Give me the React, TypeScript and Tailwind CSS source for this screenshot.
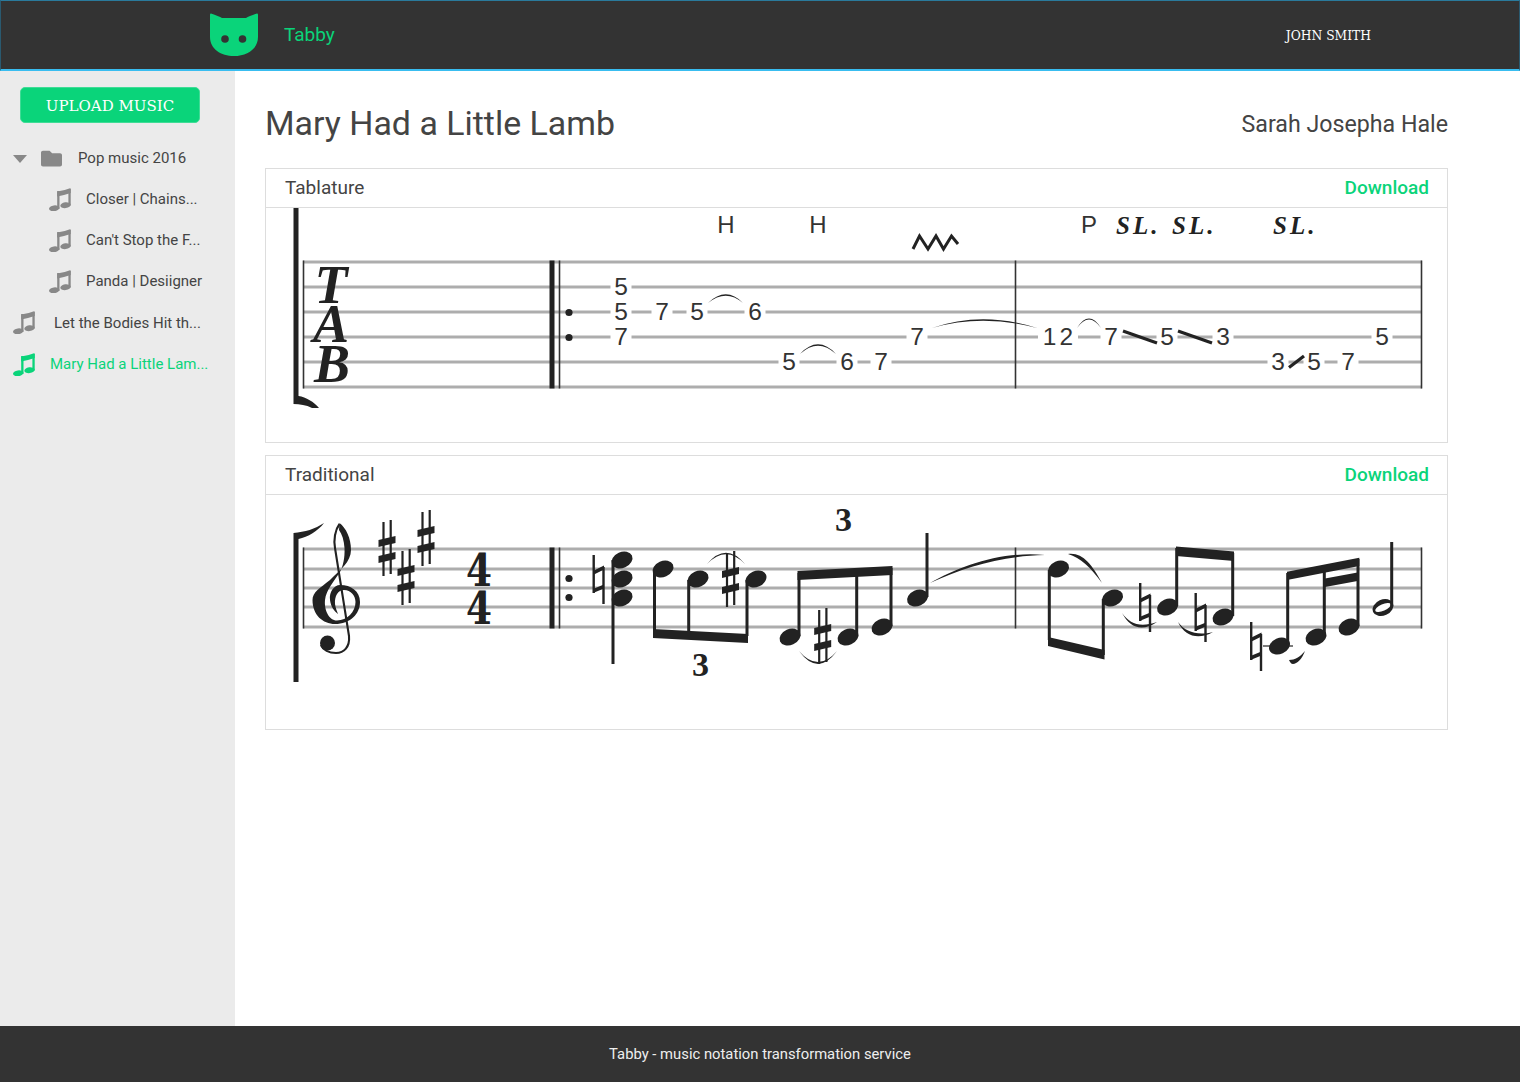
import React from "react";
import { FaFolder } from "react-icons/fa";

const INK = "#222222";
const GREEN = "#0ad47a";

function Staff({ ys, bars }: { ys: number[]; bars: number[] }) {
  return (
    <g>
      {ys.map((y) => (
        <line key={y} x1={303} x2={1422} y1={y} y2={y} stroke="#adadad" strokeWidth={3.2} />
      ))}
      {bars.map((x) => (
        <line key={x} x1={x} x2={x} y1={ys[0] - 1.5} y2={ys[ys.length - 1] + 1.5} stroke="#333" strokeWidth={1.6} />
      ))}
      <rect x={549.5} y={ys[0] - 1.5} width={5} height={ys[ys.length - 1] - ys[0] + 3} fill={INK} />
    </g>
  );
}

function Digit({ x, y, t, w = 21 }: { x: number; y: number; t: string; w?: number }) {
  return (
    <g>
      <rect x={x - w / 2} y={y - 10} width={w} height={20} fill="#fff" />
      <text
        x={t.length > 1 ? x + 1.5 : x}
        y={y + 8}
        textAnchor="middle"
        fontSize={24.5}
        fill="#333"
        letterSpacing={t.length > 1 ? 3 : 0}
        className="font-['Liberation_Sans']"
      >
        {t}
      </text>
    </g>
  );
}

function Slur({ x1, y1, cx, cy, x2, y2, w = 1.6 }: { x1: number; y1: number; cx: number; cy: number; x2: number; y2: number; w?: number }) {
  return <path d={`M${x1} ${y1} Q${cx} ${cy - w} ${x2} ${y2} Q${cx} ${cy + w} ${x1} ${y1}Z`} fill={INK} />;
}

function Label({ x, t }: { x: number; t: string }) {
  return (
    <text x={x} y={233} textAnchor="middle" fontSize={24} fill="#333" className="font-['Liberation_Sans']">
      {t}
    </text>
  );
}

function SL({ x }: { x: number }) {
  return (
    <text
      x={x}
      y={234}
      fontSize={25}
      fontWeight={700}
      fontStyle="italic"
      letterSpacing={3}
      fill={INK}
      className="font-['Liberation_Serif']"
    >
      SL.
    </text>
  );
}

function TabSheet() {
  const s = [262, 287, 312, 337, 362, 387];
  const digits: [number, number, string, number?][] = [
    [621, 287, "5"], [621, 312, "5"], [662, 312, "7"], [697, 312, "5"], [755, 312, "6"],
    [621, 337, "7"], [917, 337, "7"], [1058, 337, "12", 40], [1111, 337, "7"], [1167, 337, "5"],
    [1223, 337, "3"], [1382, 337, "5"], [789, 362, "5"], [847, 362, "6"], [881, 362, "7"],
    [1278, 362, "3"], [1314, 362, "5"], [1348, 362, "7"],
  ];
  return (
    <svg viewBox="266 208 1181 234" width={1181} height={234} className="block">
      <Staff ys={s} bars={[303.5, 559.5, 1015.5, 1421.5]} />
      <path d="M293.5 208H298.5V396C306 397 314 402 319 408H312C306 405 300 404 293.5 404Z" fill={INK} />
      {digits.map(([x, y, t, w]) => (
        <Digit key={`${x}-${y}`} x={x} y={y} t={t} w={w} />
      ))}
      <circle cx={569} cy={312.5} r={3.6} fill={INK} />
      <circle cx={569} cy={337.5} r={3.6} fill={INK} />
      <g fontSize={54} fontWeight={700} fontStyle="italic" fill={INK} textAnchor="middle" className="font-['Liberation_Serif']">
        <text x={331} y={303}>T</text>
        <text x={331} y={342}>A</text>
        <text x={332} y={382}>B</text>
      </g>
      <Label x={726} t="H" />
      <Label x={818} t="H" />
      <Label x={1089} t="P" />
      <SL x={1116} />
      <SL x={1172} />
      <SL x={1273} />
      <path d="M913 249L919.5 236L928 249L936 236L943.5 249L951.5 236L958 244" fill="none" stroke={INK} strokeWidth={3} />
      <Slur x1={708} y1={303} cx={726} cy={287} x2={743} y2={303} w={1.3} />
      <Slur x1={800} y1={354} cx={818} cy={336} x2={836} y2={354} w={1.3} />
      <Slur x1={932} y1={328} cx={982} cy={312} x2={1037} y2={328} w={1.5} />
      <Slur x1={1077} y1={328} cx={1089} cy={310} x2={1101} y2={328} w={0.9} />
      <g stroke={INK} strokeWidth={3.2}>
        <line x1={1123} y1={331} x2={1157} y2={343} />
        <line x1={1178} y1={331} x2={1212} y2={343} />
        <line x1={1289} y1={367.5} x2={1304} y2={356} />
      </g>
    </svg>
  );
}

function Head({ x, y, hollow }: { x: number; y: number; hollow?: boolean }) {
  return (
    <g transform={`rotate(-24 ${x} ${y})`}>
      <ellipse cx={x} cy={y} rx={10.9} ry={8} fill={INK} />
      {hollow && <ellipse cx={x} cy={y} rx={8.4} ry={3.2} fill="#fff" />}
    </g>
  );
}

function Stem({ x, y1, y2, w = 3 }: { x: number; y1: number; y2: number; w?: number }) {
  return <rect x={x - w / 2} y={y1} width={w} height={y2 - y1} fill={INK} />;
}

function Sharp({ x, y }: { x: number; y: number }) {
  const h = 27;
  return (
    <g fill={INK}>
      <rect x={x - 4.6} y={y - h + 1} width={2.2} height={h * 2} />
      <rect x={x + 2.6} y={y - h - 1} width={2.2} height={h * 2} />
      <polygon points={`${x - 8.5},${y - 8} ${x + 8.5},${y - 12} ${x + 8.5},${y - 5} ${x - 8.5},${y - 1}`} />
      <polygon points={`${x - 8.5},${y + 8} ${x + 8.5},${y + 4} ${x + 8.5},${y + 11} ${x - 8.5},${y + 15}`} />
    </g>
  );
}

function Natural({ x, y }: { x: number; y: number }) {
  return (
    <g fill={INK}>
      <rect x={x - 6} y={y - 24} width={2.4} height={38} />
      <rect x={x + 3.8} y={y - 12} width={2.4} height={37} />
      <polygon points={`${x - 5.5},${y - 8} ${x + 5.5},${y - 13.5} ${x + 5.5},${y - 9.5} ${x - 5.5},${y - 4}`} />
      <polygon points={`${x - 5.5},${y + 10} ${x + 5.5},${y + 5.5} ${x + 5.5},${y + 9.5} ${x - 5.5},${y + 14}`} />
    </g>
  );
}

function Clef() {
  return (
    <g>
      <path
        d="M339.5 523C346 528 351 538 351 550C351 562 340 570 330 580C320 588 312.5 592 312.5 600C312.5 615 323 624 335 624C350 624 360 614 360 602C360 591 351 585 340 585C334 585 329 592 330 600C331 607 334 611 338 614C337 611 335.5 608 335 604C334.5 596 338 590 344 590C351 590 355.5 596 355.5 602C355.5 612 347 620.5 337 620.5C329 620.5 324 610 325 600C326 590 335 580 340 572C343 566 345 558 344.5 548C344 540 342 534 339 530Z"
        fill={INK}
      />
      <path
        d="M339.5 524C335 530 333.5 540 335 548L349 636C350 647 344 653 336 653C329 653 323 650 321 645"
        fill="none"
        stroke={INK}
        strokeWidth={2.1}
      />
      <circle cx={327.5} cy={643} r={7.5} fill={INK} />
    </g>
  );
}

function Poly({ p }: { p: string }) {
  return <polygon points={p} fill={INK} />;
}

function Crescent({ d }: { d: string }) {
  return <path d={d} fill={INK} />;
}

function TraditionalSheet() {
  const s = [549, 569, 588, 607, 627];
  return (
    <svg viewBox="266 495 1181 234" width={1181} height={234} className="block">
      <Staff ys={s} bars={[303.5, 559.5, 1015.5, 1421.5]} />
      <path d="M293.5 533C305 532 315 529 324 523C318 531 308 537 298.5 539V682H293.5Z" fill={INK} />
      <Clef />
      <Sharp x={387} y={548} />
      <Sharp x={406} y={577} />
      <Sharp x={426} y={538} />
      <g fontSize={45} fontWeight={700} fill={INK} textAnchor="middle" className="font-['DejaVu_Serif']">
        <text x={479} y={586} textLength={26} lengthAdjust="spacingAndGlyphs">4</text>
        <text x={479} y={624} textLength={26} lengthAdjust="spacingAndGlyphs">4</text>
      </g>
      <g fontSize={34} fontWeight={700} fill={INK} textAnchor="middle" className="font-['Liberation_Serif']">
        <text x={843.5} y={531}>3</text>
        <text x={700.5} y={676}>3</text>
      </g>
      <circle cx={569} cy={578.5} r={3.6} fill={INK} />
      <circle cx={569} cy={597.5} r={3.6} fill={INK} />

      <Natural x={598.5} y={579} />
      <Head x={622} y={560} />
      <Head x={622} y={579} />
      <Head x={622} y={598} />
      <Stem x={613} y1={560} y2={664} />

      <Head x={663} y={569} />
      <Head x={698} y={579} />
      <Head x={756} y={579} />
      <Stem x={654.5} y1={570} y2={632} />
      <Stem x={688.7} y1={580} y2={632} />
      <Stem x={747} y1={580} y2={636} />
      <Poly p="653,629 748,634 748,643 653,638" />
      <Sharp x={730.5} y={579} />
      <Slur x1={707} y1={564} cx={726} cy={543} x2={745} y2={564} w={1.4} />

      <Head x={790} y={637} />
      <Head x={848} y={637} />
      <Head x={882} y={627} />
      <Stem x={799} y1={573} y2={636} />
      <Stem x={856.7} y1={572} y2={636} />
      <Stem x={891} y1={568} y2={626} />
      <Poly p="797.5,571 892.5,566 892.5,575 797.5,580" />
      <Sharp x={822.7} y={636} />
      <Slur x1={799} y1={651} cx={818} cy={675} x2={837} y2={651} w={1.8} />

      <Head x={917.5} y={598} />
      <Stem x={927} y1={533} y2={597} />
      <Crescent d="M930 583C960 566 1000 551 1045 555C1000 556 965 567 930 583Z" />

      <Head x={1058.5} y={569} />
      <Head x={1112.5} y={598} />
      <Stem x={1049.3} y1={570} y2={640} />
      <Stem x={1103.3} y1={599} y2={655} />
      <Poly p="1048,637 1104.5,650 1104.5,659.5 1048,646" />
      <Crescent d="M1068 554C1082 552 1092 564 1102 583C1090 567 1081 558 1068 554Z" />

      <Natural x={1145} y={607} />
      <Crescent d="M1122 613C1130 624 1140 628 1157 622C1142 632 1130 628 1122 613Z" />
      <Head x={1167.5} y={607} />
      <Head x={1223} y={617} />
      <Stem x={1176.7} y1={548} y2={606} />
      <Stem x={1232.7} y1={553} y2={616} />
      <Poly p="1176,546.5 1234,551.5 1234,561 1176,556" />
      <Natural x={1200.5} y={617} />
      <Crescent d="M1178 622C1185 632 1198 636 1213 632C1199 640 1185 637 1178 622Z" />

      <Natural x={1256} y={646} />
      <line x1={1263} x2={1293} y1={646} y2={646} stroke={INK} strokeWidth={1.2} />
      <Head x={1279.5} y={646} />
      <Head x={1316} y={637} />
      <Head x={1349} y={627} />
      <Stem x={1287.7} y1={573} y2={645} />
      <Stem x={1324.3} y1={566} y2={636} />
      <Stem x={1358} y1={559} y2={626} />
      <Poly p="1287,571.7 1359.3,557.7 1359.3,566 1287,580" />
      <Poly p="1325,578.5 1357.5,572.5 1357.5,581 1325,587" />
      <Crescent d="M1289 660C1295 660 1300 657 1305 651C1302 659 1297 664 1293 664C1291 664 1290 662 1289 660Z" />

      <Head x={1383} y={607.5} hollow />
      <Stem x={1391.7} y1={542} y2={606} />
    </svg>
  );
}

function Panel({ title, children }: { title: string; children: React.ReactNode }) {
  return (
    <section className="border border-[#dddddd] h-[275px] w-[1183px]">
      <div className="h-[39px] border-b border-[#dddddd] flex items-center justify-between pl-[19px] pr-[18px]">
        <span className="text-[19px] text-[#444444]">{title}</span>
        <span className="text-[19px] font-medium text-[#0ad47a]">Download</span>
      </div>
      {children}
    </section>
  );
}

function Note({ className }: { className: string }) {
  return (
    <svg viewBox="0 0 22 23" width={22} height={23} className={`shrink-0 ${className}`} fill="currentColor">
      <rect x={8.2} y={3} width={2.3} height={18} />
      <rect x={19.4} y={1} width={2.3} height={16.5} />
      <path d="M8.2 3.6Q15 2.6 21 0.2Q21.7 0 21.7 1V5Q15 7.2 8.2 8.6Z" />
      <ellipse cx={5.2} cy={20.3} rx={5.2} ry={2.9} transform="rotate(-8 5.2 20.3)" />
      <ellipse cx={16.5} cy={17.2} rx={5.2} ry={2.9} transform="rotate(-8 16.5 17.2)" />
    </svg>
  );
}

function Row({ text, active, pl, gap }: { text: string; active?: boolean; pl: string; gap: string }) {
  return (
    <div className={`h-[41.2px] flex items-center ${pl} ${gap}`}>
      <Note className={active ? "text-[#0ad47a]" : "text-[#888888]"} />
      <span className={`text-[15px] ${active ? "text-[#0ad47a]" : "text-[#444444]"}`}>{text}</span>
    </div>
  );
}

export default function App() {
  return (
    <div className="h-[1082px] w-[1520px] flex flex-col font-['Roboto',sans-serif] overflow-hidden bg-white">
      <header className="h-[71px] shrink-0 bg-[#333333] border-t border-t-[#2a7a9c] border-b-2 border-b-[#39bdf0] border-x border-x-[#2a5a70] flex items-center">
        <svg viewBox="0 0 48 44" width={48} height={44} className="ml-[209px]">
          <path
            d="M1 0.5C6 2 10 4 12 5H36C38 4 42 2 47 0.5C47.7 0.5 48 1 48 2V24C48 36 37 43 24 43C11 43 0 36 0 24V2C0 1 0.3 0.5 1 0.5Z"
            fill={GREEN}
          />
          <circle cx={15} cy={26} r={3.8} fill="#333" />
          <circle cx={32.5} cy={26} r={3.8} fill="#333" />
        </svg>
        <span className="ml-[26px] text-[19px] text-[#0ad47a]">Tabby</span>
        <span className="ml-auto mr-[148px] pt-[2px] text-[12.3px] text-white font-['DejaVu_Serif',serif]">JOHN SMITH</span>
      </header>
      <div className="flex-1 flex min-h-0">
        <aside className="w-[235px] shrink-0 bg-[#ebebeb] pt-[16px]">
          <button className="ml-[20px] w-[180px] h-[35.5px] pt-[3px] rounded-[5px] bg-[#0ad47a] border border-[#3fdc96] text-white text-[15px] font-['DejaVu_Serif',serif]">
            UPLOAD MUSIC
          </button>
          <div className="mt-[15px]">
            <div className="h-[41.2px] flex items-center pl-[13px]">
              <span className="w-0 h-0 border-x-[7.5px] border-x-transparent border-t-[8px] border-t-[#888888] mt-[2px]" />
              <FaFolder className="ml-[14px] w-[21px] h-[21px] text-[#888888]" />
              <span className="ml-[16px] text-[15px] text-[#444444]">Pop music 2016</span>
            </div>
            <Row text="Closer | Chains..." pl="pl-[49px]" gap="gap-[15px]" />
            <Row text="Can't Stop the F..." pl="pl-[49px]" gap="gap-[15px]" />
            <Row text="Panda | Desiigner" pl="pl-[49px]" gap="gap-[15px]" />
            <Row text="Let the Bodies Hit th..." pl="pl-[13px]" gap="gap-[19px]" />
            <Row text="Mary Had a Little Lam..." pl="pl-[13px]" gap="gap-[15px]" active />
          </div>
        </aside>
        <main className="flex-1 pl-[30px] pr-[72px]">
          <div className="h-[97px] flex items-center justify-between w-[1183px] pt-[9px]">
            <h1 className="text-[33.9px] text-[#444444]">Mary Had a Little Lamb</h1>
            <span className="text-[23.2px] text-[#444444]">Sarah Josepha Hale</span>
          </div>
          <div className="flex flex-col gap-[12px]">
            <Panel title="Tablature">
              <TabSheet />
            </Panel>
            <Panel title="Traditional">
              <TraditionalSheet />
            </Panel>
          </div>
        </main>
      </div>
      <footer className="h-[56px] shrink-0 bg-[#333333] flex items-center justify-center pt-[1px] text-[14.8px] text-[#eeeeee]">
        Tabby - music notation transformation service
      </footer>
    </div>
  );
}
